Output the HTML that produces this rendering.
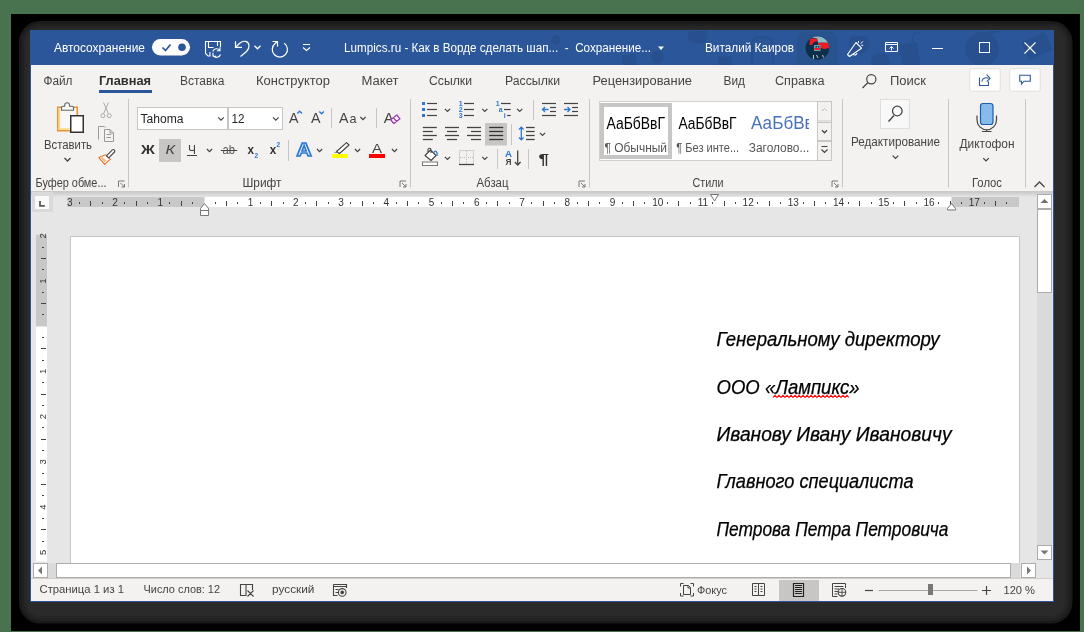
<!DOCTYPE html>
<html><head><meta charset="utf-8"><style>
html,body{margin:0;padding:0;width:1084px;height:632px;overflow:hidden;background:#48734e}
svg{display:block;font-family:"Liberation Sans", sans-serif;will-change:transform}
</style></head><body>
<svg width="1084" height="632" viewBox="0 0 1084 632">
<rect x="0" y="0" width="1084" height="632" fill="#48734e" />
<rect x="11" y="14" width="1069" height="617" fill="#000" />
<rect x="19.0" y="21.0" width="1053.5" height="602.5" fill="#1a1a1a" rx="21.0" />
<rect x="21.5" y="23.5" width="1048.5" height="597.5" fill="#212121" rx="18.5" />
<rect x="24.0" y="26.0" width="1043.5" height="592.5" fill="#262626" rx="16.0" />
<rect x="26.5" y="28.5" width="1038.5" height="587.5" fill="#2a2a2a" rx="13.5" />
<rect x="30" y="30" width="1024" height="572" fill="#2b579a" />
<rect x="31" y="65" width="1022" height="536" fill="#f3f2f1" />
<clipPath id="tb"><rect x="31" y="31" width="1022" height="34"/></clipPath>
<g fill="#28508f" clip-path="url(#tb)"><circle cx="556" cy="40" r="5"/><rect x="622" y="54.5" width="14.5" height="14" rx="3" transform="rotate(-8 629 60)"/><circle cx="657.5" cy="57" r="6.5"/><rect x="688" y="26" width="19" height="17" rx="5" transform="rotate(10 697 35)"/><rect x="718" y="56.5" width="14" height="12" rx="2"/><path d="M752 64V44C752 38 757 37 762 37C767 37 773 38 773 44V64" fill="none" stroke="#28508f" stroke-width="2.5"/><path d="M797 66V40C797 32 804 31 812 31H826C834 31 838 35 838 41V66Z" fill="#29538f"/><path d="M849 43C849 36 854 34 859 37C864 34 869 36 869 44C869 51 865 54 859 54C853 54 849 50 849 43Z"/><circle cx="880.5" cy="62" r="9.5"/><path d="M899 45L917 42L921 66H902Z"/><path d="M912 42L914 33L921 33" fill="none" stroke="#28508f" stroke-width="1.5"/><circle cx="982" cy="49" r="17"/><path d="M986 32C990 29 996 29 1001 31C996 34 990 35 986 32Z"/><rect x="1024" y="36" width="26" height="20" rx="3" transform="rotate(-25 1037 46)"/></g>
<text x="54" y="52" font-size="12" fill="#fff" textLength="91" lengthAdjust="spacingAndGlyphs" >Автосохранение</text>
<rect x="152" y="39" width="38" height="16.5" fill="#fff" rx="8.25" />
<path d="M162.5 47.5L165.5 50.5L170.5 44.5" stroke="#2b579a" stroke-width="1.7" fill="none" />
<circle cx="182" cy="47.2" r="3.8" fill="#2b579a" />
<path d="M220.5 47V41.5H205.5V53.5L208 56H210V52 M208.5 41.5V47.5H213.5 M217.5 41.5V46" stroke="#fff" stroke-width="1.1" fill="none" />
<path d="M212.7 51.5A4.2 4.2 0 0 1 219.8 50.2 M220 47.3V50.8H216.8 M220.5 54.5A4.2 4.2 0 0 1 213.3 55.8 M213 52.8V56.2H216.2" stroke="#fff" stroke-width="1.1" fill="none" />
<path d="M235.5 41.2V47.4H242" stroke="#fff" stroke-width="1.2" fill="none" />
<path d="M235.8 47L240 43C243.5 40 248.5 41 249 45.5C249.3 48 248 50 246.5 51.5L240.5 56.5" stroke="#fff" stroke-width="1.2" fill="none" />
<path d="M254.5 45.8L257.5 48.8L260.5 45.8" stroke="#fff" stroke-width="1.3" fill="none" />
<path d="M284.2 43.2A7.6 7.6 0 1 1 275.1 43.5L277.5 41.5 M272.5 41.5H277.5V46.5" stroke="#fff" stroke-width="1.2" fill="none" />
<path d="M303 44.5H310 M303 47.5L306.5 50.5L310 47.5" stroke="#fff" stroke-width="1.2" fill="none" />
<text x="344" y="51.5" font-size="12" fill="#fff" textLength="307" lengthAdjust="spacingAndGlyphs" xml:space="preserve">Lumpics.ru - Как в Ворде сделать шап...  -  Сохранение...</text>
<path d="M658 46.5H664L661 50Z" stroke="none" stroke-width="1" fill="#fff" />
<text x="705" y="52" font-size="12" fill="#fff" textLength="89" lengthAdjust="spacingAndGlyphs" >Виталий Каиров</text>
<clipPath id="av"><circle cx="817.4" cy="48" r="11.8"/></clipPath>
<g clip-path="url(#av)"><rect x="805" y="35" width="25" height="26" fill="#0d2f4a"/><path d="M812 37.5C816 35.5 824 35.5 829 42.8H818L817 38.5Z" fill="#8fbfc6"/><path d="M810 38.5H817L818 41L814 42L812 45H809.5Z" fill="#ee1c24"/><path d="M818 43L822 42.5L829.5 43V48L824 49L820 47.5L818 45Z" fill="#ee1c24"/><path d="M814 45H820.5V51H814Z" fill="#6fa0ac"/><path d="M814.5 48H820V50H814.5Z" fill="#ee1c24"/><rect x="815.5" y="46" width="1.5" height="1.5" fill="#0d2f4a"/><rect x="818" y="46" width="1.5" height="1.5" fill="#0d2f4a"/><path d="M813.5 55V59M816.5 55L818 58M822.5 55L823.5 57.5" stroke="#d8d8d8" stroke-width="0.9"/></g>
<path d="M847.5 54.5L856 42.5L861.5 48.2L849.5 56.5Z M853 54A2.2 2.2 0 0 0 857 53" stroke="#fff" stroke-width="1.1" fill="none" stroke-linejoin="round"/>
<path d="M858.5 41V42.8 M860.8 43.6L862.8 41.4 M861.3 45.3H863.2" stroke="#fff" stroke-width="1" fill="none" />
<path d="M885.5 42.5H897.5V51.5H885.5Z M885.5 44.5H897.5 M891.5 50.5V46.5 M889.5 48.5L891.5 46.5L893.5 48.5" stroke="#fff" stroke-width="1" fill="none" />
<line x1="932" y1="48.5" x2="943" y2="48.5" stroke="#fff" stroke-width="1"/>
<rect x="979.5" y="42.5" width="10" height="10" fill="none" stroke="#fff" stroke-width="1" />
<path d="M1024.5 42.5L1035.5 53.5M1035.5 42.5L1024.5 53.5" stroke="#fff" stroke-width="1.1" fill="none" />
<text x="43.5" y="85" font-size="12.5" fill="#444" textLength="29" lengthAdjust="spacingAndGlyphs" >Файл</text>
<text x="99" y="85" font-size="13" fill="#303030" textLength="52" lengthAdjust="spacingAndGlyphs" font-weight="bold" >Главная</text>
<text x="180" y="85" font-size="12.5" fill="#444" textLength="44.5" lengthAdjust="spacingAndGlyphs" >Вставка</text>
<text x="256" y="85" font-size="12.5" fill="#444" textLength="74" lengthAdjust="spacingAndGlyphs" >Конструктор</text>
<text x="361.5" y="85" font-size="12.5" fill="#444" textLength="37" lengthAdjust="spacingAndGlyphs" >Макет</text>
<text x="429" y="85" font-size="12.5" fill="#444" textLength="43" lengthAdjust="spacingAndGlyphs" >Ссылки</text>
<text x="505" y="85" font-size="12.5" fill="#444" textLength="55" lengthAdjust="spacingAndGlyphs" >Рассылки</text>
<text x="592.5" y="85" font-size="12.5" fill="#444" textLength="99.5" lengthAdjust="spacingAndGlyphs" >Рецензирование</text>
<text x="723.5" y="85" font-size="12.5" fill="#444" textLength="21.5" lengthAdjust="spacingAndGlyphs" >Вид</text>
<text x="775" y="85" font-size="12.5" fill="#444" textLength="49.5" lengthAdjust="spacingAndGlyphs" >Справка</text>
<rect x="99" y="90" width="53" height="3" fill="#2b579a" />
<circle cx="871.3" cy="79.3" r="4.6" fill="none" stroke="#444" stroke-width="1.2" />
<line x1="862.5" y1="88" x2="868" y2="82.5" stroke="#444" stroke-width="1.3"/>
<text x="890" y="85" font-size="12.5" fill="#444" textLength="36" lengthAdjust="spacingAndGlyphs" >Поиск</text>
<rect x="969.75" y="68.75" width="30.5" height="22.5" fill="#fff" stroke="#e1dfdd" stroke-width="1" rx="2" />
<rect x="1009.75" y="68.75" width="30.5" height="22.5" fill="#fff" stroke="#e1dfdd" stroke-width="1" rx="2" />
<path d="M979.5 77.5V85.5H988.5V81.5 M981.8 81.5C982.3 78.3 985 77 988.5 78.2" stroke="#2b579a" stroke-width="1.1" fill="none" />
<path d="M986.6 74.6L990 78.2L986.8 81.6" stroke="#2b579a" stroke-width="1.1" fill="none" />
<path d="M1019.75 75.25H1030.25V81.25H1024L1021.5 84V81.25H1019.75Z" stroke="#2b579a" stroke-width="1.1" fill="none" />
<line x1="128.5" y1="99" x2="128.5" y2="187.5" stroke="#c8c6c4" stroke-width="1"/>
<line x1="410.5" y1="99" x2="410.5" y2="187.5" stroke="#c8c6c4" stroke-width="1"/>
<line x1="589.5" y1="99" x2="589.5" y2="187.5" stroke="#c8c6c4" stroke-width="1"/>
<line x1="842.5" y1="99" x2="842.5" y2="187.5" stroke="#c8c6c4" stroke-width="1"/>
<line x1="948.5" y1="99" x2="948.5" y2="187.5" stroke="#c8c6c4" stroke-width="1"/>
<line x1="1025.5" y1="99" x2="1025.5" y2="187.5" stroke="#c8c6c4" stroke-width="1"/>
<rect x="57.75" y="107.25" width="19.5" height="23.5" fill="#f8f8f8" stroke="#e8912d" stroke-width="1.5" />
<path d="M59.5 108.5V129H76" stroke="#fcd783" stroke-width="1.6" fill="none" />
<path d="M61.5 110.2V107.8C61.5 106.8 62.2 106.2 63.2 106.2H64.7V105.2A2.4 2.4 0 0 1 69.5 105.2V106.2H71.8C72.8 106.2 73.5 106.8 73.5 107.8V110.2Z" stroke="#666" stroke-width="1.1" fill="#f8f8f8" />
<rect x="70.75" y="115.75" width="12.5" height="16.5" fill="#fff" stroke="#333" stroke-width="1.5" />
<text x="44" y="148.5" font-size="12.5" fill="#444" textLength="48" lengthAdjust="spacingAndGlyphs" >Вставить</text>
<path d="M64.5 158.0L67.5 161.0L70.5 158.0" stroke="#444" stroke-width="1.3" fill="none" />
<path d="M103.5 102.5L108.3 113.5M108.5 102.5L103.7 113.5" stroke="#aaa" stroke-width="1" fill="none" />
<circle cx="102.9" cy="115.7" r="2" fill="none" stroke="#aaa" stroke-width="1" />
<circle cx="109.2" cy="115.7" r="2" fill="none" stroke="#aaa" stroke-width="1" />
<path d="M98.5 139.5V126.5H104.5L105.5 127.5 M104.5 129.5H110L113.5 133V141.5H104.5Z M110 129.5V133H113.5 M106.5 134.5H111M106.5 137.5H111" stroke="#999" stroke-width="1" fill="none" />
<path d="M98.8 157.6L105.8 154.8L110.2 159.2L104.8 164.4Z" stroke="#e8702a" stroke-width="1.1" fill="#fff" stroke-linejoin="round"/>
<path d="M100.5 158.2L104.8 162.6L106.5 160.5L102.5 157.2Z" stroke="none" stroke-width="1" fill="#f7b98a" />
<path d="M106.5 155.8L112.4 149.9A1.5 1.5 0 0 1 114.5 152L108.6 157.9Z" stroke="#444" stroke-width="1.1" fill="#fff" stroke-linejoin="round"/>
<text x="35.5" y="187.4" font-size="12" fill="#444" textLength="71" lengthAdjust="spacingAndGlyphs" >Буфер обме...</text>
<path d="M118.5 187.0V181.0H124.5 M120.5 183.0L124.5 187.0 M124.5 184.0V187.0H121.5" stroke="#777" stroke-width="1" fill="none" />
<rect x="137.5" y="107.5" width="90" height="22" fill="#fff" stroke="#c8c6c4" stroke-width="1" />
<rect x="228.5" y="107.5" width="54" height="22" fill="#fff" stroke="#c8c6c4" stroke-width="1" />
<text x="140.5" y="123" font-size="12.5" fill="#262626" textLength="43" lengthAdjust="spacingAndGlyphs" >Tahoma</text>
<text x="231.5" y="123" font-size="12.5" fill="#262626" textLength="13" lengthAdjust="spacingAndGlyphs" >12</text>
<path d="M218.2 117.39999999999999L221 120.2L223.8 117.39999999999999" stroke="#444" stroke-width="1.2" fill="none" />
<path d="M273.0 117.39999999999999L275.8 120.2L278.6 117.39999999999999" stroke="#444" stroke-width="1.2" fill="none" />
<text x="289" y="123" font-size="14.5" fill="#444" textLength="9.5" lengthAdjust="spacingAndGlyphs" >A</text>
<path d="M297.3 113.5L299.6 111.3L301.9 113.5" stroke="#2b78d4" stroke-width="1.4" fill="none" />
<text x="311" y="123" font-size="14.5" fill="#444" textLength="9.5" lengthAdjust="spacingAndGlyphs" >A</text>
<path d="M319.3 111.5L321.6 113.7L323.9 111.5" stroke="#2b78d4" stroke-width="1.4" fill="none" />
<text x="339" y="123" font-size="14" fill="#444" textLength="9.5" lengthAdjust="spacingAndGlyphs" >A</text>
<text x="349.5" y="123" font-size="13" fill="#444" textLength="7" lengthAdjust="spacingAndGlyphs" >a</text>
<path d="M360.4 117.0L363 119.6L365.6 117.0" stroke="#444" stroke-width="1.2" fill="none" />
<text x="383.8" y="123" font-size="15" fill="#444" textLength="10" lengthAdjust="spacingAndGlyphs" >A</text>
<path d="M390.8 119.8L396.8 115L400 118.8L394 123.6Z M393.4 117.7L396.6 121.5" stroke="#a33bb8" stroke-width="1.3" fill="#fff" stroke-linejoin="round"/>
<text x="141" y="154" font-size="13.5" fill="#333" textLength="13.8" lengthAdjust="spacingAndGlyphs" font-weight="bold" >Ж</text>
<rect x="159" y="139" width="22" height="23" fill="#c8c6c4" />
<text x="165.5" y="154" font-size="13.5" fill="#444" textLength="9.5" lengthAdjust="spacingAndGlyphs" font-style="italic" >К</text>
<text x="188" y="153.7" font-size="12.5" fill="#444" textLength="8" lengthAdjust="spacingAndGlyphs" >Ч</text>
<line x1="187" y1="155.5" x2="197" y2="155.5" stroke="#444" stroke-width="1"/>
<path d="M206.9 149.0L209.5 151.60000000000002L212.1 149.0" stroke="#444" stroke-width="1.2" fill="none" />
<text x="222.5" y="154" font-size="13" fill="#555" textLength="12.5" lengthAdjust="spacingAndGlyphs" >ab</text>
<line x1="220.8" y1="150.5" x2="237.2" y2="150.5" stroke="#444" stroke-width="1"/>
<text x="247.5" y="154" font-size="12.5" fill="#333" textLength="6.5" lengthAdjust="spacingAndGlyphs" font-weight="bold" >x</text>
<text x="254.5" y="158" font-size="6.5" fill="#2b78d4" font-weight="bold" >2</text>
<text x="269.8" y="154" font-size="12.5" fill="#333" textLength="6.5" lengthAdjust="spacingAndGlyphs" font-weight="bold" >x</text>
<text x="276.5" y="147" font-size="6.5" fill="#2b78d4" font-weight="bold" >2</text>
<text x="296.4" y="156.3" font-size="17.5" fill="#fff" textLength="15.2" lengthAdjust="spacingAndGlyphs" font-weight="bold" stroke="#2b78d4" stroke-width="1.5">A</text>
<path d="M317.0 149.0L319.6 151.60000000000002L322.20000000000005 149.0" stroke="#444" stroke-width="1.2" fill="none" />
<path d="M336.5 151.5L346.5 142.6L349 145L339.5 153.5Z" stroke="#444" stroke-width="1.1" fill="#fff" stroke-linejoin="round"/>
<path d="M333.7 152.6L336.5 151.5L339.5 153.5Z" stroke="none" stroke-width="1" fill="#777" />
<rect x="332" y="154" width="16" height="4" fill="#ffff00" />
<path d="M354.9 149.0L357.5 151.60000000000002L360.1 149.0" stroke="#444" stroke-width="1.2" fill="none" />
<text x="372" y="152.6" font-size="13.5" fill="#444" textLength="10" lengthAdjust="spacingAndGlyphs" >A</text>
<rect x="369" y="154" width="16" height="4" fill="#ff0000" />
<path d="M391.9 149.0L394.5 151.60000000000002L397.1 149.0" stroke="#444" stroke-width="1.2" fill="none" />
<text x="242.5" y="187.4" font-size="12" fill="#444" textLength="39" lengthAdjust="spacingAndGlyphs" >Шрифт</text>
<path d="M400 187.0V181.0H406 M402 183.0L406 187.0 M406 184.0V187.0H403" stroke="#777" stroke-width="1" fill="none" />
<rect x="422" y="102.0" width="3" height="3" fill="#2b78d4" />
<line x1="427" y1="103.5" x2="437" y2="103.5" stroke="#444" stroke-width="1.2"/>
<rect x="422" y="108.0" width="3" height="3" fill="#2b78d4" />
<line x1="427" y1="109.5" x2="437" y2="109.5" stroke="#444" stroke-width="1.2"/>
<rect x="422" y="114.0" width="3" height="3" fill="#2b78d4" />
<line x1="427" y1="115.5" x2="437" y2="115.5" stroke="#444" stroke-width="1.2"/>
<path d="M444.9 108.9L447.5 111.5L450.1 108.9" stroke="#444" stroke-width="1.2" fill="none" />
<text x="458.8" y="106.3" font-size="7" fill="#2b78d4" font-weight="bold" >1</text>
<line x1="464" y1="103.5" x2="474" y2="103.5" stroke="#444" stroke-width="1.2"/>
<text x="458.8" y="112.3" font-size="7" fill="#2b78d4" font-weight="bold" >2</text>
<line x1="464" y1="109.5" x2="474" y2="109.5" stroke="#444" stroke-width="1.2"/>
<text x="458.8" y="118.3" font-size="7" fill="#2b78d4" font-weight="bold" >3</text>
<line x1="464" y1="115.5" x2="474" y2="115.5" stroke="#444" stroke-width="1.2"/>
<path d="M482.2 108.9L484.8 111.5L487.40000000000003 108.9" stroke="#444" stroke-width="1.2" fill="none" />
<text x="495.8" y="106.3" font-size="7" fill="#2b78d4" font-weight="bold" >1</text>
<line x1="501" y1="103.5" x2="510.7" y2="103.5" stroke="#444" stroke-width="1.2"/>
<text x="498.8" y="112.3" font-size="7" fill="#2b78d4" font-weight="bold" >a</text>
<line x1="504" y1="109.5" x2="510.7" y2="109.5" stroke="#444" stroke-width="1.2"/>
<text x="503.8" y="118.3" font-size="7" fill="#2b78d4" font-weight="bold" >i</text>
<line x1="507" y1="115.5" x2="510.7" y2="115.5" stroke="#444" stroke-width="1.2"/>
<path d="M517.1 108.9L519.7 111.5L522.3000000000001 108.9" stroke="#444" stroke-width="1.2" fill="none" />
<line x1="542" y1="103.5" x2="556" y2="103.5" stroke="#444" stroke-width="1.2"/>
<line x1="550" y1="107.5" x2="556" y2="107.5" stroke="#444" stroke-width="1.2"/>
<line x1="550" y1="111.5" x2="556" y2="111.5" stroke="#444" stroke-width="1.2"/>
<line x1="542" y1="115.5" x2="556" y2="115.5" stroke="#444" stroke-width="1.2"/>
<path d="M548.5 109.5H542.5 M545 107L542.5 109.5L545 112" stroke="#2b78d4" stroke-width="1.3" fill="none" />
<line x1="564" y1="103.5" x2="578" y2="103.5" stroke="#444" stroke-width="1.2"/>
<line x1="572" y1="107.5" x2="578" y2="107.5" stroke="#444" stroke-width="1.2"/>
<line x1="572" y1="111.5" x2="578" y2="111.5" stroke="#444" stroke-width="1.2"/>
<line x1="564" y1="115.5" x2="578" y2="115.5" stroke="#444" stroke-width="1.2"/>
<path d="M564 109.5H570 M567.5 107L570 109.5L567.5 112" stroke="#2b78d4" stroke-width="1.3" fill="none" />
<rect x="485" y="123" width="22" height="22.5" fill="#c8c6c4" />
<line x1="422.8" y1="127.5" x2="436.8" y2="127.5" stroke="#444" stroke-width="1.3"/>
<line x1="422.8" y1="131.5" x2="432.8" y2="131.5" stroke="#444" stroke-width="1.3"/>
<line x1="422.8" y1="135.5" x2="436.8" y2="135.5" stroke="#444" stroke-width="1.3"/>
<line x1="422.8" y1="139.5" x2="432.8" y2="139.5" stroke="#444" stroke-width="1.3"/>
<line x1="445" y1="127.5" x2="459" y2="127.5" stroke="#444" stroke-width="1.3"/>
<line x1="447" y1="131.5" x2="457" y2="131.5" stroke="#444" stroke-width="1.3"/>
<line x1="445" y1="135.5" x2="459" y2="135.5" stroke="#444" stroke-width="1.3"/>
<line x1="447" y1="139.5" x2="457" y2="139.5" stroke="#444" stroke-width="1.3"/>
<line x1="467" y1="127.5" x2="481" y2="127.5" stroke="#444" stroke-width="1.3"/>
<line x1="471" y1="131.5" x2="481" y2="131.5" stroke="#444" stroke-width="1.3"/>
<line x1="467" y1="135.5" x2="481" y2="135.5" stroke="#444" stroke-width="1.3"/>
<line x1="471" y1="139.5" x2="481" y2="139.5" stroke="#444" stroke-width="1.3"/>
<line x1="489.2" y1="127.5" x2="503.2" y2="127.5" stroke="#333" stroke-width="1.3"/>
<line x1="489.2" y1="131.5" x2="503.2" y2="131.5" stroke="#333" stroke-width="1.3"/>
<line x1="489.2" y1="135.5" x2="503.2" y2="135.5" stroke="#333" stroke-width="1.3"/>
<line x1="489.2" y1="139.5" x2="503.2" y2="139.5" stroke="#333" stroke-width="1.3"/>
<line x1="526" y1="127.5" x2="534.7" y2="127.5" stroke="#444" stroke-width="1.3"/>
<line x1="526" y1="131.5" x2="534.7" y2="131.5" stroke="#444" stroke-width="1.3"/>
<line x1="526" y1="135.5" x2="534.7" y2="135.5" stroke="#444" stroke-width="1.3"/>
<line x1="526" y1="139.5" x2="534.7" y2="139.5" stroke="#444" stroke-width="1.3"/>
<path d="M521.3 127V140 M519 129.5L521.3 127.2L523.6 129.5 M519 137.5L521.3 139.8L523.6 137.5" stroke="#2b78d4" stroke-width="1.3" fill="none" />
<path d="M539.9 132.89999999999998L542.5 135.5L545.1 132.89999999999998" stroke="#444" stroke-width="1.2" fill="none" />
<path d="M425 155.5L430.5 150L436 155.5L431 160.5Z M428 152.5V149.8A1.5 1.5 0 0 1 431 149.8V153" stroke="#444" stroke-width="1.1" fill="#fff" stroke-linejoin="round"/>
<path d="M434 152.5C434.5 150.5 436.5 150.5 437 153V156" stroke="#2b78d4" stroke-width="1.3" fill="none" />
<rect x="422.5" y="162" width="15" height="3.5" fill="#fff" stroke="#777" stroke-width="1" />
<path d="M444.9 156.89999999999998L447.5 159.5L450.1 156.89999999999998" stroke="#444" stroke-width="1.2" fill="none" />
<rect x="459.5" y="150.5" width="14" height="14" fill="none" stroke="#aaa" stroke-width="1" stroke-dasharray="1 1"/>
<path d="M466.5 151V164 M460 157.5H473" stroke="#bbb" stroke-width="1" fill="none" stroke-dasharray="1 1"/>
<line x1="459" y1="164.5" x2="474" y2="164.5" stroke="#444" stroke-width="1.3"/>
<path d="M482.2 156.89999999999998L484.8 159.5L487.40000000000003 156.89999999999998" stroke="#444" stroke-width="1.2" fill="none" />
<text x="505" y="156.8" font-size="8.5" fill="#2b78d4" textLength="7" lengthAdjust="spacingAndGlyphs" font-weight="bold" >A</text>
<text x="505.5" y="165.4" font-size="8.5" fill="#444" textLength="6" lengthAdjust="spacingAndGlyphs" font-weight="bold" >Я</text>
<path d="M517.7 150.5V165 M514.8 162L517.7 165L520.6 162" stroke="#444" stroke-width="1.3" fill="none" />
<text x="538.5" y="164" font-size="15" fill="#333" textLength="10.5" lengthAdjust="spacingAndGlyphs" font-weight="bold" >¶</text>
<text x="476.5" y="187.4" font-size="12" fill="#444" textLength="32" lengthAdjust="spacingAndGlyphs" >Абзац</text>
<path d="M579 187.0V181.0H585 M581 183.0L585 187.0 M585 184.0V187.0H582" stroke="#777" stroke-width="1" fill="none" />
<line x1="533.5" y1="100" x2="533.5" y2="120" stroke="#c8c6c4" stroke-width="1"/>
<line x1="511.5" y1="124" x2="511.5" y2="145" stroke="#c8c6c4" stroke-width="1"/>
<line x1="497.5" y1="149" x2="497.5" y2="169" stroke="#c8c6c4" stroke-width="1"/>
<line x1="528.5" y1="149" x2="528.5" y2="169" stroke="#c8c6c4" stroke-width="1"/>
<line x1="331.5" y1="108" x2="331.5" y2="128" stroke="#c8c6c4" stroke-width="1"/>
<line x1="376.5" y1="108" x2="376.5" y2="128" stroke="#c8c6c4" stroke-width="1"/>
<line x1="288.5" y1="140" x2="288.5" y2="161" stroke="#c8c6c4" stroke-width="1"/>
<rect x="599.5" y="101.5" width="232" height="59" fill="#fff" stroke="#d2d0ce" stroke-width="1" />
<rect x="602" y="105" width="68" height="52" fill="none" stroke="#c6c6c6" stroke-width="4" />
<text x="606.5" y="128.8" font-size="15.8" fill="#000" textLength="58.5" lengthAdjust="spacingAndGlyphs" >АаБбВвГ</text>
<text x="604.5" y="152" font-size="12" fill="#555" textLength="62.5" lengthAdjust="spacingAndGlyphs" >¶ Обычный</text>
<text x="678.5" y="128.8" font-size="15.8" fill="#000" textLength="58" lengthAdjust="spacingAndGlyphs" >АаБбВвГ</text>
<text x="676.2" y="152" font-size="12" fill="#555" textLength="63" lengthAdjust="spacingAndGlyphs" >¶ Без инте...</text>
<clipPath id="c3"><rect x="745" y="100" width="64" height="40"/></clipPath>
<text x="751" y="129.3" font-size="17.5" fill="#4a72bb" textLength="72" lengthAdjust="spacingAndGlyphs" clip-path="url(#c3)">АаБбВвГ</text>
<text x="748.8" y="152" font-size="12" fill="#555" textLength="60.5" lengthAdjust="spacingAndGlyphs" >Заголово...</text>
<rect x="817.5" y="101.5" width="14" height="19.5" fill="#f3f2f1" stroke="#c8c6c4" stroke-width="1" />
<rect x="817.5" y="122.5" width="14" height="18" fill="#f3f2f1" stroke="#c8c6c4" stroke-width="1" />
<rect x="817.5" y="141.5" width="14" height="19" fill="#f3f2f1" stroke="#c8c6c4" stroke-width="1" />
<path d="M822 111L824.5 108.5L827 111" stroke="#bbb" stroke-width="1" fill="none" />
<path d="M822.0 130.25L824.5 132.75L827.0 130.25" stroke="#444" stroke-width="1.3" fill="none" />
<path d="M821.5 146.5H827.5 M821.5 149.5L824.5 152.5L827.5 149.5" stroke="#444" stroke-width="1.2" fill="none" />
<text x="692.5" y="187.4" font-size="12" fill="#444" textLength="31" lengthAdjust="spacingAndGlyphs" >Стили</text>
<path d="M832 187.0V181.0H838 M834 183.0L838 187.0 M838 184.0V187.0H835" stroke="#777" stroke-width="1" fill="none" />
<rect x="880.5" y="99.5" width="29" height="29" fill="#f8f8f8" stroke="#e1dfdd" stroke-width="1" />
<circle cx="897.3" cy="111" r="4.8" fill="none" stroke="#444" stroke-width="1.3" />
<line x1="888.5" y1="121.5" x2="894" y2="115.5" stroke="#444" stroke-width="1.4"/>
<text x="851" y="146" font-size="12.5" fill="#444" textLength="89" lengthAdjust="spacingAndGlyphs" >Редактирование</text>
<path d="M892.7 155.6L895.5 158.4L898.3 155.6" stroke="#444" stroke-width="1.3" fill="none" />
<rect x="980.5" y="103.5" width="12.5" height="21" fill="#87bbec" stroke="#1f5fa8" stroke-width="1.2" rx="2.5" />
<path d="M977 115.5V120A9.7 9.7 0 0 0 996.5 120V115.5 M986.75 129.5V131.5 M982 131.5H991.5" stroke="#444" stroke-width="1.2" fill="none" />
<text x="959.5" y="148" font-size="12.5" fill="#444" textLength="55" lengthAdjust="spacingAndGlyphs" >Диктофон</text>
<path d="M983.2 158.1L986 160.9L988.8 158.1" stroke="#444" stroke-width="1.3" fill="none" />
<text x="972" y="187.4" font-size="12" fill="#444" textLength="30" lengthAdjust="spacingAndGlyphs" >Голос</text>
<path d="M1034.5 187L1039.5 182L1044.5 187" stroke="#444" stroke-width="1.3" fill="none" />
<rect x="31" y="191" width="1022" height="388" fill="#e6e6e6" />
<linearGradient id="sh" x1="0" y1="0" x2="0" y2="1"><stop offset="0" stop-color="#c8c8c8"/><stop offset="0.3" stop-color="#cdcdcd"/><stop offset="1" stop-color="#e6e6e6"/></linearGradient>
<rect x="31" y="191" width="1022" height="6" fill="url(#sh)" />
<rect x="32" y="192" width="21" height="20" fill="#dadada" />
<rect x="35" y="196" width="14" height="13" fill="#fafafa" />
<path d="M40 201V205.9H44.8" stroke="#5a5a5a" stroke-width="1.8" fill="none" />
<rect x="67.5" y="197" width="951.5" height="10" fill="#c8c8c8" />
<rect x="204.5" y="197" width="747" height="10" fill="#fff" />
<text x="69.71000000000001" y="206" font-size="10" fill="#333" text-anchor="middle" >3</text>
<rect x="79" y="202" width="1" height="2" fill="#444" />
<rect x="90" y="201" width="1" height="5" fill="#444" />
<rect x="102" y="202" width="1" height="2" fill="#444" />
<text x="114.94000000000001" y="206" font-size="10" fill="#333" text-anchor="middle" >2</text>
<rect x="124" y="202" width="1" height="2" fill="#444" />
<rect x="136" y="201" width="1" height="5" fill="#444" />
<rect x="147" y="202" width="1" height="2" fill="#444" />
<text x="160.17000000000002" y="206" font-size="10" fill="#333" text-anchor="middle" >1</text>
<rect x="169" y="202" width="1" height="2" fill="#444" />
<rect x="181" y="201" width="1" height="5" fill="#444" />
<rect x="192" y="202" width="1" height="2" fill="#444" />
<rect x="215" y="202" width="1" height="2" fill="#444" />
<rect x="226" y="201" width="1" height="5" fill="#444" />
<rect x="237" y="202" width="1" height="2" fill="#444" />
<text x="250.63" y="206" font-size="10" fill="#333" text-anchor="middle" >1</text>
<rect x="260" y="202" width="1" height="2" fill="#444" />
<rect x="271" y="201" width="1" height="5" fill="#444" />
<rect x="283" y="202" width="1" height="2" fill="#444" />
<text x="295.86" y="206" font-size="10" fill="#333" text-anchor="middle" >2</text>
<rect x="305" y="202" width="1" height="2" fill="#444" />
<rect x="316" y="201" width="1" height="5" fill="#444" />
<rect x="328" y="202" width="1" height="2" fill="#444" />
<text x="341.09000000000003" y="206" font-size="10" fill="#333" text-anchor="middle" >3</text>
<rect x="350" y="202" width="1" height="2" fill="#444" />
<rect x="362" y="201" width="1" height="5" fill="#444" />
<rect x="373" y="202" width="1" height="2" fill="#444" />
<text x="386.32" y="206" font-size="10" fill="#333" text-anchor="middle" >4</text>
<rect x="396" y="202" width="1" height="2" fill="#444" />
<rect x="407" y="201" width="1" height="5" fill="#444" />
<rect x="418" y="202" width="1" height="2" fill="#444" />
<text x="431.54999999999995" y="206" font-size="10" fill="#333" text-anchor="middle" >5</text>
<rect x="441" y="202" width="1" height="2" fill="#444" />
<rect x="452" y="201" width="1" height="5" fill="#444" />
<rect x="463" y="202" width="1" height="2" fill="#444" />
<text x="476.78" y="206" font-size="10" fill="#333" text-anchor="middle" >6</text>
<rect x="486" y="202" width="1" height="2" fill="#444" />
<rect x="497" y="201" width="1" height="5" fill="#444" />
<rect x="509" y="202" width="1" height="2" fill="#444" />
<text x="522.01" y="206" font-size="10" fill="#333" text-anchor="middle" >7</text>
<rect x="531" y="202" width="1" height="2" fill="#444" />
<rect x="543" y="201" width="1" height="5" fill="#444" />
<rect x="554" y="202" width="1" height="2" fill="#444" />
<text x="567.24" y="206" font-size="10" fill="#333" text-anchor="middle" >8</text>
<rect x="577" y="202" width="1" height="2" fill="#444" />
<rect x="588" y="201" width="1" height="5" fill="#444" />
<rect x="599" y="202" width="1" height="2" fill="#444" />
<text x="612.47" y="206" font-size="10" fill="#333" text-anchor="middle" >9</text>
<rect x="622" y="202" width="1" height="2" fill="#444" />
<rect x="633" y="201" width="1" height="5" fill="#444" />
<rect x="644" y="202" width="1" height="2" fill="#444" />
<text x="657.6999999999999" y="206" font-size="10" fill="#333" text-anchor="middle" >10</text>
<rect x="667" y="202" width="1" height="2" fill="#444" />
<rect x="678" y="201" width="1" height="5" fill="#444" />
<rect x="690" y="202" width="1" height="2" fill="#444" />
<text x="702.93" y="206" font-size="10" fill="#333" text-anchor="middle" >11</text>
<rect x="712" y="202" width="1" height="2" fill="#444" />
<rect x="724" y="201" width="1" height="5" fill="#444" />
<rect x="735" y="202" width="1" height="2" fill="#444" />
<text x="748.16" y="206" font-size="10" fill="#333" text-anchor="middle" >12</text>
<rect x="757" y="202" width="1" height="2" fill="#444" />
<rect x="769" y="201" width="1" height="5" fill="#444" />
<rect x="780" y="202" width="1" height="2" fill="#444" />
<text x="793.39" y="206" font-size="10" fill="#333" text-anchor="middle" >13</text>
<rect x="803" y="202" width="1" height="2" fill="#444" />
<rect x="814" y="201" width="1" height="5" fill="#444" />
<rect x="825" y="202" width="1" height="2" fill="#444" />
<text x="838.6199999999999" y="206" font-size="10" fill="#333" text-anchor="middle" >14</text>
<rect x="848" y="202" width="1" height="2" fill="#444" />
<rect x="859" y="201" width="1" height="5" fill="#444" />
<rect x="871" y="202" width="1" height="2" fill="#444" />
<text x="883.8499999999999" y="206" font-size="10" fill="#333" text-anchor="middle" >15</text>
<rect x="893" y="202" width="1" height="2" fill="#444" />
<rect x="904" y="201" width="1" height="5" fill="#444" />
<rect x="916" y="202" width="1" height="2" fill="#444" />
<text x="929.0799999999999" y="206" font-size="10" fill="#333" text-anchor="middle" >16</text>
<rect x="938" y="202" width="1" height="2" fill="#444" />
<rect x="950" y="201" width="1" height="5" fill="#444" />
<rect x="961" y="202" width="1" height="2" fill="#444" />
<text x="974.31" y="206" font-size="10" fill="#333" text-anchor="middle" >17</text>
<rect x="984" y="202" width="1" height="2" fill="#444" />
<rect x="995" y="201" width="1" height="5" fill="#444" />
<rect x="1006" y="202" width="1" height="2" fill="#444" />
<path d="M200.5 208.5L204.5 203.5L208.5 208.5V210.5H200.5Z M200.5 210.5V215.5H208.5V210.5" stroke="#777" stroke-width="1" fill="#fff" />
<path d="M710.5 194.5H718.5L714.5 201Z" stroke="#777" stroke-width="1" fill="#fff" />
<path d="M947.5 208.5L951.5 203.5L955.5 208.5V210H947.5Z" stroke="#777" stroke-width="1" fill="#fff" />
<rect x="36" y="234.5" width="11" height="327" fill="#fff" />
<rect x="36" y="234.5" width="11" height="92" fill="#c8c8c8" />
<text x="235.74" y="0" font-size="9.5" fill="#333" text-anchor="middle" transform="translate(46 0) rotate(-90 0 0) translate(-471.48 0)" >2</text>
<rect x="42" y="247" width="2" height="1" fill="#444" />
<rect x="41" y="258" width="5" height="1" fill="#444" />
<rect x="42" y="269" width="2" height="1" fill="#444" />
<text x="280.96999999999997" y="0" font-size="9.5" fill="#333" text-anchor="middle" transform="translate(46 0) rotate(-90 0 0) translate(-561.9399999999999 0)" >1</text>
<rect x="42" y="292" width="2" height="1" fill="#444" />
<rect x="41" y="303" width="5" height="1" fill="#444" />
<rect x="42" y="314" width="2" height="1" fill="#444" />
<rect x="42" y="337" width="2" height="1" fill="#444" />
<rect x="41" y="348" width="5" height="1" fill="#444" />
<rect x="42" y="360" width="2" height="1" fill="#444" />
<text x="371.43" y="0" font-size="9.5" fill="#333" text-anchor="middle" transform="translate(46 0) rotate(-90 0 0) translate(-742.86 0)" >1</text>
<rect x="42" y="382" width="2" height="1" fill="#444" />
<rect x="41" y="394" width="5" height="1" fill="#444" />
<rect x="42" y="405" width="2" height="1" fill="#444" />
<text x="416.65999999999997" y="0" font-size="9.5" fill="#333" text-anchor="middle" transform="translate(46 0) rotate(-90 0 0) translate(-833.3199999999999 0)" >2</text>
<rect x="42" y="427" width="2" height="1" fill="#444" />
<rect x="41" y="439" width="5" height="1" fill="#444" />
<rect x="42" y="450" width="2" height="1" fill="#444" />
<text x="461.89" y="0" font-size="9.5" fill="#333" text-anchor="middle" transform="translate(46 0) rotate(-90 0 0) translate(-923.78 0)" >3</text>
<rect x="42" y="473" width="2" height="1" fill="#444" />
<rect x="41" y="484" width="5" height="1" fill="#444" />
<rect x="42" y="495" width="2" height="1" fill="#444" />
<text x="507.12" y="0" font-size="9.5" fill="#333" text-anchor="middle" transform="translate(46 0) rotate(-90 0 0) translate(-1014.24 0)" >4</text>
<rect x="42" y="518" width="2" height="1" fill="#444" />
<rect x="41" y="529" width="5" height="1" fill="#444" />
<rect x="42" y="541" width="2" height="1" fill="#444" />
<text x="552.3499999999999" y="0" font-size="9.5" fill="#333" text-anchor="middle" transform="translate(46 0) rotate(-90 0 0) translate(-1104.6999999999998 0)" >5</text>
<rect x="70.5" y="236.5" width="949" height="340" fill="#fff" stroke="#c6c6c6" stroke-width="1" />
<rect x="71" y="237" width="948" height="325" fill="#fff" />
<text x="716.5" y="346" font-size="19.3" fill="#000" textLength="223" lengthAdjust="spacingAndGlyphs" font-style="italic" stroke="#000" stroke-width="0.25">Генеральному директору</text>
<text x="716.5" y="393.5" font-size="19.3" fill="#000" textLength="143" lengthAdjust="spacingAndGlyphs" font-style="italic" stroke="#000" stroke-width="0.25">ООО «Лампикс»</text>
<text x="716.5" y="440.5" font-size="19.3" fill="#000" textLength="235" lengthAdjust="spacingAndGlyphs" font-style="italic" stroke="#000" stroke-width="0.25">Иванову Ивану Ивановичу</text>
<text x="716.5" y="488" font-size="19.3" fill="#000" textLength="197" lengthAdjust="spacingAndGlyphs" font-style="italic" stroke="#000" stroke-width="0.25">Главного специалиста</text>
<text x="716.5" y="535.5" font-size="19.3" fill="#000" textLength="232" lengthAdjust="spacingAndGlyphs" font-style="italic" stroke="#000" stroke-width="0.25">Петрова Петра Петровича</text>
<path d="M773 397.5L775 395.3L777 397.5L779 395.3L781 397.5L783 395.3L785 397.5L787 395.3L789 397.5L791 395.3L793 397.5L795 395.3L797 397.5L799 395.3L801 397.5L803 395.3L805 397.5L807 395.3L809 397.5L811 395.3L813 397.5L815 395.3L817 397.5L819 395.3L821 397.5L823 395.3L825 397.5L827 395.3L829 397.5L831 395.3L833 397.5L835 395.3L837 397.5L839 395.3L841 397.5L843 395.3L845 397.5L847 395.3L849 397.5" stroke="#f00" stroke-width="1.1" fill="none" />
<rect x="1037" y="194" width="15" height="366" fill="#dadada" />
<rect x="1037.5" y="194.5" width="14" height="14" fill="#fff" stroke="#acacac" stroke-width="1" />
<path d="M1040.5 203H1048.5L1044.5 199Z" stroke="none" stroke-width="1" fill="#707070" />
<rect x="1037.5" y="209.5" width="14" height="83" fill="#fff" stroke="#acacac" stroke-width="1" />
<rect x="1037.5" y="545.5" width="14" height="14" fill="#fff" stroke="#acacac" stroke-width="1" />
<path d="M1040.5 550.5H1048.5L1044.5 554.5Z" stroke="none" stroke-width="1" fill="#777" />
<rect x="33.5" y="563.5" width="14" height="14" fill="#fff" stroke="#acacac" stroke-width="1" />
<path d="M42 566.5V574.5L38 570.5Z" stroke="none" stroke-width="1" fill="#777" />
<rect x="48" y="563" width="8" height="15" fill="#dadada" />
<rect x="56.5" y="563.5" width="954" height="14" fill="#fff" stroke="#acacac" stroke-width="1" />
<rect x="1011" y="563" width="9" height="15" fill="#dadada" />
<rect x="1021.5" y="563.5" width="14" height="14" fill="#fff" stroke="#acacac" stroke-width="1" />
<path d="M1027 566.5V574.5L1031 570.5Z" stroke="none" stroke-width="1" fill="#777" />
<line x1="31" y1="578.5" x2="1053" y2="578.5" stroke="#d0d0d0" stroke-width="1"/>
<rect x="31" y="579" width="1022" height="22" fill="#f3f2f1" />
<text x="39.5" y="593.2" font-size="11.5" fill="#444" textLength="84.5" lengthAdjust="spacingAndGlyphs" >Страница 1 из 1</text>
<text x="143.5" y="593.2" font-size="11.5" fill="#444" textLength="76.5" lengthAdjust="spacingAndGlyphs" >Число слов: 12</text>
<path d="M240.5 584.5H246V595.5H240.5Z M246 584.5H252.5V590 M247.5 590.5L253.5 596.5M253.5 590.5L247.5 596.5" stroke="#444" stroke-width="1.1" fill="none" />
<text x="272" y="593.2" font-size="11.5" fill="#444" textLength="42.5" lengthAdjust="spacingAndGlyphs" >русский</text>
<path d="M333.5 584.5H346.5V588 M333.5 584.5V595.5H337.5 M333.5 586.5H346.5 M335.5 589.5H338.5M335.5 592.5H338" stroke="#444" stroke-width="1.1" fill="none" />
<circle cx="342.2" cy="592.4" r="3.8" fill="#f3f2f1" stroke="#444" stroke-width="1.1" />
<circle cx="342.2" cy="592.4" r="1.8" fill="#444" />
<path d="M680.5 586.5V583.5H683.5 M690.5 583.5H693.5V586.5 M680.5 593V596H683.5 M690.5 596H693.5V593 M683.5 585.5H688.5L690.5 587.5V594.5H683.5Z M688 585.5V588H690.5" stroke="#444" stroke-width="1" fill="none" />
<text x="697" y="593.6" font-size="11.5" fill="#444" textLength="30" lengthAdjust="spacingAndGlyphs" >Фокус</text>
<path d="M752.5 583.5H758.5V595.5H752.5Z M758.5 583.5H764.5V595.5H758.5Z M754.5 586.5H756.5M754.5 589H756.5M754.5 591.5H756.5M760.5 586.5H762.5M760.5 589H762.5M760.5 591.5H762.5" stroke="#444" stroke-width="1" fill="none" />
<rect x="779" y="580" width="40" height="21" fill="#c8c6c4" />
<path d="M793.5 583.5H803.5V596.5H793.5Z" stroke="#222" stroke-width="1.2" fill="none" />
<line x1="795" y1="585.5" x2="802" y2="585.5" stroke="#222" stroke-width="1"/>
<line x1="795" y1="587.5" x2="802" y2="587.5" stroke="#222" stroke-width="1"/>
<line x1="795" y1="589.5" x2="802" y2="589.5" stroke="#222" stroke-width="1"/>
<line x1="795" y1="591.5" x2="802" y2="591.5" stroke="#222" stroke-width="1"/>
<line x1="795" y1="593.5" x2="802" y2="593.5" stroke="#222" stroke-width="1"/>
<path d="M832.5 583.5H845.5V588 M832.5 583.5V596.5H837.5 M834.5 586.5H843.5M834.5 589H839M834.5 591.5H838M834.5 594H837.5" stroke="#444" stroke-width="1" fill="none" />
<circle cx="842" cy="592.3" r="3.8" fill="#f3f2f1" stroke="#444" stroke-width="1.1" />
<path d="M838.2 592.3H845.8 M842 588.5V596.1" stroke="#444" stroke-width="0.9" fill="none" />
<line x1="865" y1="590.5" x2="873" y2="590.5" stroke="#444" stroke-width="1.2"/>
<line x1="878.5" y1="590.5" x2="977.5" y2="590.5" stroke="#a8a8a8" stroke-width="1"/>
<rect x="928" y="584" width="5" height="11" fill="#777" />
<path d="M982 590.5H991M986.5 586V595" stroke="#444" stroke-width="1.2" fill="none" />
<text x="1003.5" y="593.8" font-size="11.5" fill="#444" textLength="31.5" lengthAdjust="spacingAndGlyphs" >120 %</text>
</svg>
</body></html>
